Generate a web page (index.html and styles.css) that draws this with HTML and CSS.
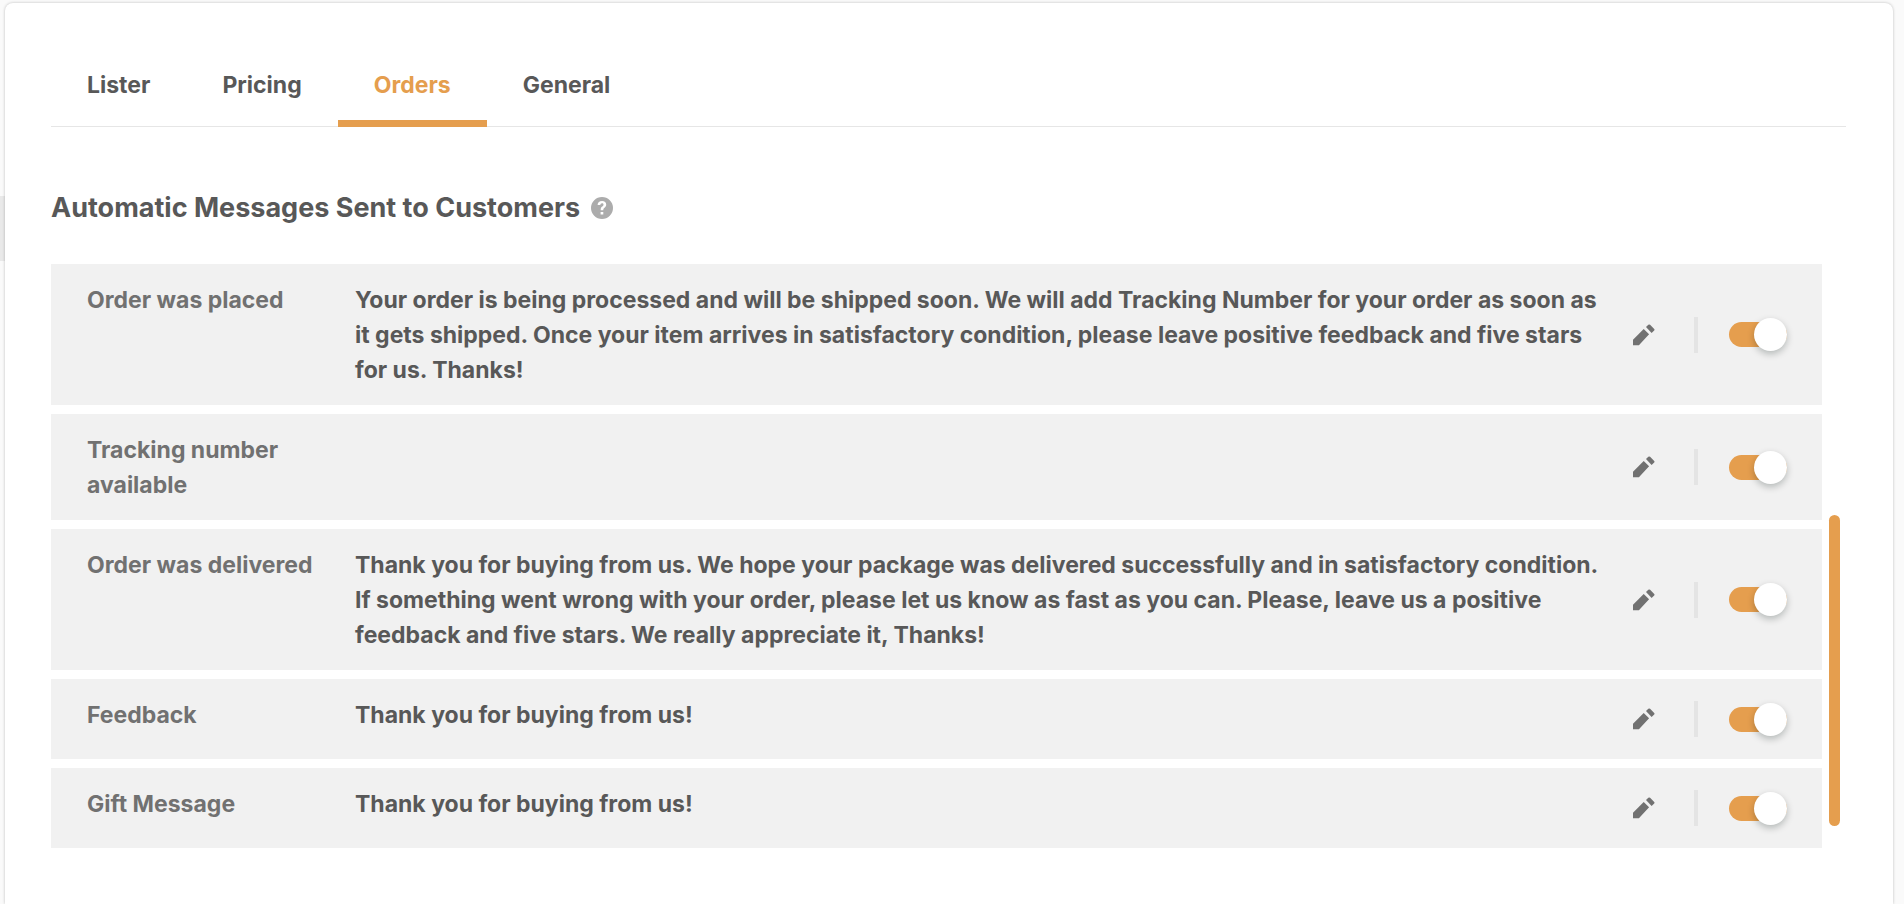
FILE: index.html
```html
<!DOCTYPE html>
<html lang="en">
<head>
<meta charset="utf-8">
<title>Settings - Orders</title>
<link rel="stylesheet" href="styles.css">
</head>
<body>
<svg class="sprite" aria-hidden="true">
  <symbol id="pencil" viewBox="0 0 22 22">
    <path d="M0 15.700 10.700 5.100 16.100 10.300 5.900 21.300H0zM13 3.100 15.300.8Q16.200 0 17.100.8L21.200 4.900Q22 5.800 21.200 6.600L18.600 8.900z"/>
  </symbol>
</svg>
<div class="page">
  <div class="rail"><div class="rail-item"></div></div>
  <main class="card">
    <nav class="tabs" aria-label="Settings">
      <a class="tab" href="#lister">Lister</a>
      <a class="tab" href="#pricing">Pricing</a>
      <a class="tab tab-active" href="#orders" aria-current="page">Orders</a>
      <a class="tab" href="#general">General</a>
    </nav>
    <section class="messages">
      <div class="heading">
        <h1 class="title">Automatic Messages Sent to Customers</h1>
        <button class="help" type="button" aria-label="Help">
          <svg class="help-icon" viewBox="0 0 24 24" aria-hidden="true"><path d="M12 1a11 11 0 1 0 0 22 11 11 0 0 0 0-22zm1.300 17.600h-2.700V16h2.700v2.600zm2.500-8.300c-.4.700-1 1.200-1.600 1.700-.6.500-.9.900-.9 1.700v.5h-2.600v-.8c0-1.300.5-2 1.500-2.800.8-.7 1.300-1.100 1.300-1.900 0-.9-.6-1.400-1.500-1.400-1 0-1.600.7-1.700 1.700H7.600C7.700 6.600 9.400 5 12.100 5c2.500 0 4.100 1.400 4.100 3.500 0 .7-.1 1.300-.4 1.800z"/></svg>
        </button>
      </div>
      <div class="scroller">
        <ul class="list">
          <li class="row">
            <label class="name" for="placed">Order was placed</label>
            <p class="text">Your order is being processed and will be shipped soon. We will add Tracking Number for your order as soon as it gets shipped. Once your item arrives in satisfactory condition, please leave positive feedback and five stars for us. Thanks!</p>
            <div class="actions">
              <button class="edit" type="button" aria-label="Edit"><svg class="edit-icon"><use href="#pencil"/></svg></button>
              <span class="divider"></span>
              <input class="toggle" id="placed" type="checkbox" checked>
            </div>
          </li>
          <li class="row">
            <label class="name" for="tracking">Tracking number available</label>
            <p class="text"></p>
            <div class="actions">
              <button class="edit" type="button" aria-label="Edit"><svg class="edit-icon"><use href="#pencil"/></svg></button>
              <span class="divider"></span>
              <input class="toggle" id="tracking" type="checkbox" checked>
            </div>
          </li>
          <li class="row">
            <label class="name" for="delivered">Order was delivered</label>
            <p class="text">Thank you for buying from us. We hope your package was delivered successfully and in satisfactory condition. If something went wrong with your order, please let us know as fast as you can. Please, leave us a positive feedback and five stars. We really appreciate it, Thanks!</p>
            <div class="actions">
              <button class="edit" type="button" aria-label="Edit"><svg class="edit-icon"><use href="#pencil"/></svg></button>
              <span class="divider"></span>
              <input class="toggle" id="delivered" type="checkbox" checked>
            </div>
          </li>
          <li class="row">
            <label class="name" for="feedback">Feedback</label>
            <p class="text">Thank you for buying from us!</p>
            <div class="actions">
              <button class="edit" type="button" aria-label="Edit"><svg class="edit-icon"><use href="#pencil"/></svg></button>
              <span class="divider"></span>
              <input class="toggle" id="feedback" type="checkbox" checked>
            </div>
          </li>
          <li class="row">
            <label class="name" for="gift">Gift Message</label>
            <p class="text">Thank you for buying from us!</p>
            <div class="actions">
              <button class="edit" type="button" aria-label="Edit"><svg class="edit-icon"><use href="#pencil"/></svg></button>
              <span class="divider"></span>
              <input class="toggle" id="gift" type="checkbox" checked>
            </div>
          </li>
        </ul>
        <div class="scrollbar"><div class="thumb"></div></div>
      </div>
    </section>
  </main>
</div>
</body>
</html>
```
FILE: styles.css
```css
* {
  box-sizing: border-box;
}

body {
  margin: 0;
  background: #fafafa;
  color: #585858;
  font-family: Inter, "Liberation Sans", sans-serif;
  font-size: 23px;
  font-weight: 700;
  line-height: 35px;
}

button {
  padding: 0;
  border: 0;
  background: none;
  cursor: pointer;
}

.sprite {
  display: none;
}

.page {
  display: flex;
  min-height: 100vh;
  padding: 3px 11px 0 0;
}

.rail {
  width: 5px;
  padding-top: 193px;
}

.rail-item {
  height: 65px;
  background: #e9e9e9;
}

.card {
  flex: 1;
  min-width: 0;
  padding: 64px 47px 48px 46px;
  border-radius: 8px 8px 0 0;
  background: #fff;
  box-shadow: 0 0 3px rgba(0, 0, 0, 0.25);
}

.tabs {
  display: flex;
  height: 60px;
  border-bottom: 1px solid #e6e6e6;
}

.tab {
  height: 60px;
  padding: 1px 36px 0;
  border-bottom: 7px solid transparent;
  color: inherit;
  text-decoration: none;
}

.tab-active {
  border-color: #e59e4e;
  color: #e59e4e;
}

.heading {
  display: flex;
  align-items: center;
  gap: 10px;
  margin: 63px 0 39px;
}

.title {
  margin: 0;
  font-size: 27px;
  line-height: 35px;
}

.help,
.help-icon {
  display: block;
  width: 24px;
  height: 24px;
}

.help-icon {
  fill: #acacac;
}

.scroller {
  display: flex;
  gap: 7px;
  padding-right: 6px;
}

.list {
  display: flex;
  flex: 1;
  flex-direction: column;
  gap: 9px;
  margin: 0;
  padding: 0;
  list-style: none;
}

.row {
  display: grid;
  grid-template-columns: 240px 1fr 154px;
  column-gap: 28px;
  min-height: 80px;
  padding: 0 35px 0 36px;
  background: #f1f1f1;
}

.name,
.text {
  margin: 0;
  padding: 19px 0 17px;
}

.name {
  color: #717171;
}

.actions {
  display: flex;
  align-items: center;
}

.edit,
.edit-icon {
  display: block;
  width: 22px;
  height: 22px;
}

.edit-icon {
  fill: #717171;
}

.divider {
  width: 4px;
  height: 36px;
  margin: 0 31px 0 39px;
  background: #e4e4e4;
}

.toggle {
  position: relative;
  width: 58px;
  height: 25px;
  margin: 0;
  border-radius: 13px;
  background: #bdbdbd;
  appearance: none;
  cursor: pointer;
}

.toggle:checked {
  background: #e59e4e;
}

.toggle::before {
  position: absolute;
  top: -4px;
  left: 0;
  width: 33px;
  height: 33px;
  border-radius: 50%;
  background: #fff;
  box-shadow: 0 3px 7px rgba(0, 20, 15, 0.25);
  content: "";
}

.toggle:checked::before {
  right: 0;
  left: auto;
}

.scrollbar {
  display: flex;
  flex-direction: column;
  justify-content: flex-end;
  width: 11px;
  padding-bottom: 22px;
}

.thumb {
  height: 311px;
  border-radius: 6px;
  background: #e59e4e;
}
```
